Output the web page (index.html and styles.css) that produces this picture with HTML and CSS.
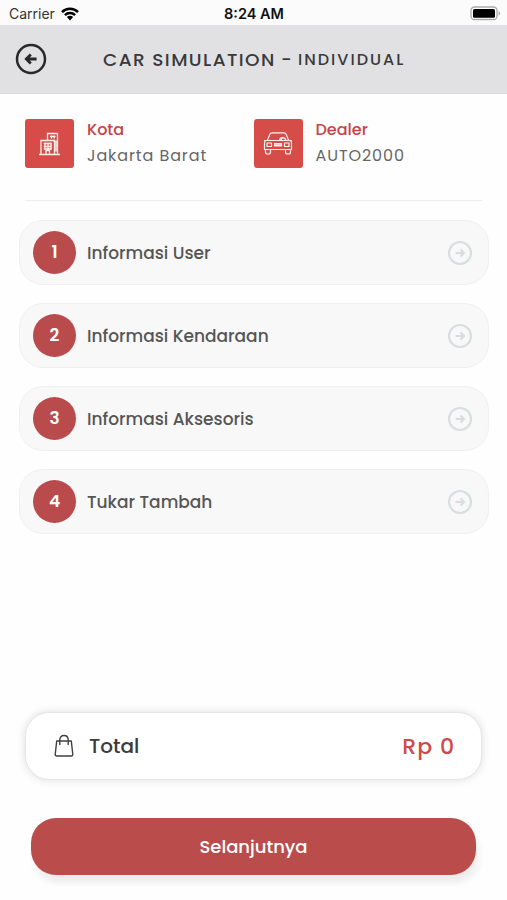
FILE: index.html
```html
<!DOCTYPE html>
<html lang="id">
<head>
<meta charset="utf-8">
<title>Car Simulation</title>
<link rel="stylesheet" href="styles.css">
</head>
<body>
<svg class="sprite" aria-hidden="true">
  <symbol id="next" viewBox="0 0 26 26">
    <circle cx="13" cy="13" r="11" fill="none" stroke="currentColor" stroke-width="2.2"/>
    <path d="M8.6 13h8M13.5 9.5l3.5 3.5-3.5 3.5" fill="none" stroke="currentColor" stroke-width="2.2"/>
  </symbol>
</svg>
<div class="status">
  <div class="carrier"><span>Carrier</span>
    <svg width="18" height="14" viewBox="0 0 18 14"><g fill="none" stroke="#000" stroke-width="2.5"><path d="M1 5.1a11.3 11.3 0 0 1 16 0"/><path d="M3.9 8.1a7.2 7.2 0 0 1 10.2 0"/></g><path d="M5.9 10.1a4.4 4.4 0 0 1 6.2 0L9 13.4z"/></svg>
  </div>
  <strong class="clock">8:24 AM</strong>
  <svg class="battery" width="32" height="15" viewBox="0 0 32 15"><rect x="1" y="1" width="26" height="12.5" rx="3.5" fill="#fff" stroke="#aaa" stroke-width="1.3"/><rect x="3" y="3" width="22" height="8.7" rx="1.5"/><path d="M28.6 5v4.8q3-2.4 0-4.8" fill="#aaa"/></svg>
</div>
<header class="header">
  <svg class="back" width="32" height="32" viewBox="0 0 32 32" fill="none" stroke="#29292b"><circle cx="16" cy="16" r="14" stroke-width="2.5"/><path d="M21.6 16H12M15.8 11.5L11.3 16l4.5 4.5" stroke-width="2.8"/></svg>
  <h1 class="title"><span class="title-main">CAR SIMULATION</span><span class="dash">-</span><span class="title-sub">INDIVIDUAL</span></h1>
</header>
<main>
  <section class="info">
    <div class="fact">
      <span class="tile"><svg width="24" height="26" viewBox="0 0 24 26" fill="none" stroke="#fff0ec" stroke-width="1.3"><path d="M1 23.5h21M3 23V9.5h13.5V23M9.5 9V2.5h10V23M8 23v-3.5h3.5V23M5.7 12.5h8.2M5.7 15.5h8.2M5.7 18h8.2M7 11.5v7M10 11.5v7M13 11.5v7M12 5.5h5.5M13.5 4.5v3M16.2 4.5v3M18 9.5v11"/></svg></span>
      <div><div class="label">Kota</div><div class="value city">Jakarta Barat</div></div>
    </div>
    <div class="fact">
      <span class="tile"><svg width="30" height="26" viewBox="0 0 30 26" fill="none" stroke="#fff0ec" stroke-width="1.2" stroke-linejoin="round"><path d="M4.3 9.5L7 3q.5-1.2 2-1.2h12q1.5 0 2 1.2l2.7 6.5M2.5 9.5h25q1 1 1 3v6h-27v-6q0-2 1-3M2.5 18.5V21q0 2 2 2h1q2 0 2-2v-2.5M22.5 18.5V21q0 2 2 2h1q2 0 2-2v-2.5M4 12h4.5v3.5H4zM21.5 12H26v3.5h-4.500zM11.500 12.500h7v2.500h-7zM11.500 13.800h7M16.500 9a3.200 3.200 0 0 1 6.200 0M20 6l-2 3M1 9.500h2M27 9.500h2"/></svg></span>
      <div><div class="label dealer">Dealer</div><div class="value brand">AUTO2000</div></div>
    </div>
  </section>
  <section class="steps">
    <div class="step"><span class="number">1</span><span class="name n1">Informasi User</span><svg class="go"><use href="#next"/></svg></div>
    <div class="step"><span class="number">2</span><span class="name n2">Informasi Kendaraan</span><svg class="go"><use href="#next"/></svg></div>
    <div class="step"><span class="number">3</span><span class="name n3">Informasi Aksesoris</span><svg class="go"><use href="#next"/></svg></div>
    <div class="step"><span class="number">4</span><span class="name n4">Tukar Tambah</span><svg class="go"><use href="#next"/></svg></div>
  </section>
</main>
<footer>
  <div class="total">
    <svg width="20" height="24" viewBox="0 0 20 24" fill="none" stroke="#404040" stroke-width="1.4" stroke-linejoin="round"><path d="M2.700 7h14.600l1.500 13.500q0 1.500-1.500 1.500H2.700q-1.500 0-1.500-1.500zM5.800 11V6q0-4.500 4.200-4.500T14.200 6v5"/></svg>
    <span class="total-label">Total</span><span class="amount">Rp 0</span>
  </div>
  <button class="submit">Selanjutnya</button>
</footer>
</body>
</html>
```
FILE: styles.css
```css
* { box-sizing: border-box; }
body {
  margin: 0;
  height: 900px;
  display: flex;
  flex-direction: column;
  background: #fefefe;
  color: #555;
  font-family: Poppins, Inter, sans-serif;
  overflow: hidden;
}
svg { display: block; flex: none; }
.sprite { position: absolute; width: 0; height: 0; }
.status {
  height: 25px;
  flex: none;
  display: grid;
  grid-template-columns: 1fr auto 1fr;
  align-items: center;
  padding: 2px 5px 0 9px;
  background: #fbfbfb;
  color: #111;
  font: 14px/20px Inter, sans-serif;
}
.carrier { display: flex; align-items: center; gap: 6px; color: #333; }
.clock { font-weight: 600; font-size: 14.500px; margin-right: 3px; }
.battery { justify-self: end; }
.header {
  height: 69px;
  flex: none;
  display: flex;
  align-items: center;
  padding: 0 15px 1px;
  background: #e1e1e3;
  border-bottom: 1px solid #dadadc;
  color: #39393b;
}
.title { display: flex; align-items: center; margin: 2px 0 0 56px; font-weight: 500; line-height: 24px; white-space: nowrap; }
.title-main { width: 178px; font-size: 18.500px; letter-spacing: 1.400px; }
.dash { width: 17px; font-size: 18px; }
.title-sub { font-size: 16px; letter-spacing: 2px; }
.info {
  height: 107px;
  display: flex;
  align-items: flex-start;
  margin: 0 25px;
  padding-top: 25px;
  border-bottom: 1px solid #eee;
}
.fact { width: 228.500px; display: flex; gap: 13px; white-space: nowrap; }
.tile {
  width: 49px;
  height: 49px;
  flex: none;
  display: flex;
  align-items: center;
  justify-content: center;
  border-radius: 3px;
  background: #d54c49;
}
.label { margin-top: -2px; color: #c34547; font-size: 16px; line-height: 26px; font-weight: 500; }
.value { color: #666; font-size: 16px; line-height: 26px; letter-spacing: 0.900px; }
.steps { display: flex; flex-direction: column; gap: 18px; padding: 19px 18px 0 19px; }
.step {
  height: 65px;
  display: flex;
  align-items: center;
  padding: 0 15px 0 13px;
  border: 1px solid #f0f0f0;
  border-radius: 24px;
  background: #f8f8f8;
}
.number {
  width: 43px;
  height: 43px;
  flex: none;
  border-radius: 50%;
  background: #ba4b4d;
  color: #fff;
  font-size: 17px;
  font-weight: 600;
  line-height: 43px;
  text-align: center;
}
.name { margin-left: 11px; font-size: 17px; font-weight: 500; white-space: nowrap; }
.go { width: 26px; height: 26px; margin-left: auto; color: #d8dddf; }
footer { margin-top: auto; padding: 0 25px 25px; }
.total {
  height: 68px;
  display: flex;
  align-items: center;
  padding: 0 26px 0 28px;
  border: 1px solid #e6e6e6;
  border-radius: 24px;
  background: #fff;
  box-shadow: 0 0 8px rgba(0, 0, 0, 0.130);
}
.total-label { margin-left: 15px; color: #3b3b3b; font-size: 20px; font-weight: 500; }
.amount { margin-left: auto; color: #cf4948; font-size: 22px; font-weight: 500; letter-spacing: 1px; }
.submit {
  display: block;
  width: 445px;
  height: 57px;
  margin: 38px 0 0 6px;
  padding: 0;
  border: 0;
  border-radius: 25px;
  background: #ba4d4c;
  box-shadow: 3px 8px 7px rgba(0, 0, 0, 0.070);
  color: #fff;
  font: 500 18px/57px Poppins, Inter, sans-serif;
}
```
